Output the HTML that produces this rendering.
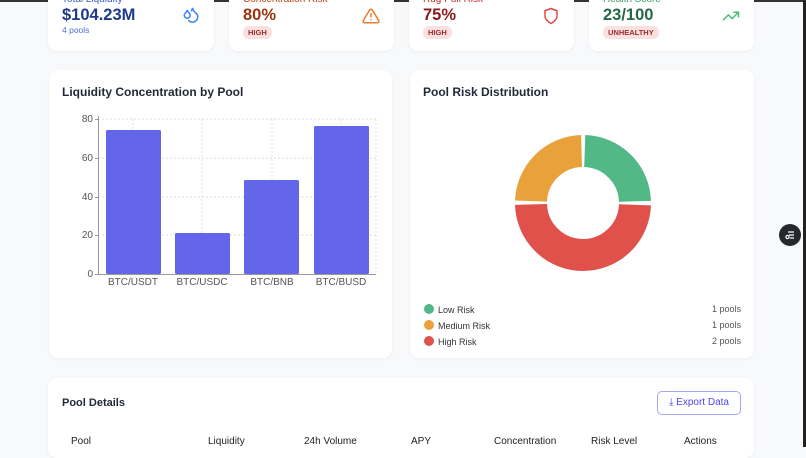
<!DOCTYPE html>
<html><head><meta charset="utf-8"><style>
*{box-sizing:border-box;margin:0;padding:0}
body{width:806px;height:447px;overflow:hidden;background:#f8f9fb;font-family:"Liberation Sans",sans-serif;position:relative}
.card{position:absolute;background:#fff;border-radius:9px;box-shadow:0 1px 3px rgba(0,0,0,.05)}
.lbl{position:absolute;left:14px;font-size:10px}
.val{position:absolute;left:14px;font-size:16.5px;font-weight:bold}
.badge{position:absolute;left:14px;font-size:7.5px;font-weight:bold;background:#fbe0e0;color:#9b2c2c;padding:2px 5px;border-radius:6px}
.ic{position:absolute;right:14px}
h3{position:absolute;left:13px;top:15px;font-size:12px;font-weight:bold;color:#1f2937}
.tick{position:absolute;font-size:10px;color:#555;text-align:right;width:20px}
.xl{position:absolute;top:277px;font-size:10px;color:#555;text-align:center;width:70px}
.leg{position:absolute;left:424px;font-size:9px;color:#333}
.leg i{display:inline-block;width:10px;height:10px;border-radius:50%;margin-right:4px;vertical-align:-1px}
.pc{position:absolute;right:65px;font-size:9px;color:#555}
.th{position:absolute;top:436px;font-size:10px;color:#222}
</style></head><body>
<div style="position:absolute;left:0;top:0;width:806px;height:2px;background:#333"></div>
<div style="position:absolute;right:0;top:0;width:3px;height:447px;background:#222"></div>

<div class="card" style="left:48px;top:-10px;width:166px;height:61px">
<div class="lbl" style="color:#3b5bcc;top:4px">Total Liquidity</div>
<div class="val" style="color:#1e3a8a;top:16px">$104.23M</div>
<div style="position:absolute;left:14px;top:35px;font-size:8.5px;color:#4a6fd8">4 pools</div>
<svg class="ic" style="top:16px" width="18" height="18" viewBox="0 0 24 24" fill="none" stroke="#3b82f6" stroke-width="2" stroke-linecap="round"><path d="M7 16.3c2.2 0 4-1.8 4-4 0-1.2-.6-2.3-1.8-3.3S7.3 6.6 7 5.3c-.3 1.3-1.1 2.6-2.2 3.7S3 11.1 3 12.3c0 2.2 1.8 4 4 4z"/><path d="M12.6 6.4C13.3 5.3 13.8 4 14 2.5c.5 2.5 2 4.9 4 6.5s3 3.5 3 5.5a7 7 0 0 1-11.9 4.9"/></svg>
</div>
<div class="card" style="left:229px;top:-10px;width:165px;height:61px">
<div class="lbl" style="color:#c2410c;top:4px">Concentration Risk</div>
<div class="val" style="color:#9a3412;top:16px">80%</div>
<div class="badge" style="top:36px">HIGH</div>
<svg class="ic" style="top:17px" width="18" height="18" viewBox="0 0 24 24" fill="none" stroke="#ea7a2c" stroke-width="2" stroke-linecap="round" stroke-linejoin="round"><path d="M10.3 3.9 1.8 18a2 2 0 0 0 1.7 3h17a2 2 0 0 0 1.7-3L13.7 3.9a2 2 0 0 0-3.4 0z"/><path d="M12 9v4M12 17h.01"/></svg>
</div>
<div class="card" style="left:409px;top:-10px;width:165px;height:61px">
<div class="lbl" style="color:#c53030;top:4px">Rug Pull Risk</div>
<div class="val" style="color:#8b1c1c;top:16px">75%</div>
<div class="badge" style="top:36px">HIGH</div>
<svg class="ic" style="top:17px" width="18" height="18" viewBox="0 0 24 24" fill="none" stroke="#e04848" stroke-width="2" stroke-linejoin="round"><path d="M12 22s8-4 8-10V5l-8-3-8 3v7c0 6 8 10 8 10z"/></svg>
</div>
<div class="card" style="left:589px;top:-10px;width:165px;height:61px">
<div class="lbl" style="color:#38a169;top:4px">Health Score</div>
<div class="val" style="color:#276749;top:16px">23/100</div>
<div class="badge" style="top:36px">UNHEALTHY</div>
<svg class="ic" style="top:17px" width="18" height="18" viewBox="0 0 24 24" fill="none" stroke="#48bb78" stroke-width="2" stroke-linecap="round" stroke-linejoin="round"><path d="M22 7l-8.5 8.5-5-5L2 17"/><path d="M16 7h6v6"/></svg>
</div>

<div class="card" style="left:49px;top:70px;width:343px;height:288px"><h3>Liquidity Concentration by Pool</h3></div>
<div class="card" style="left:410px;top:70px;width:344px;height:288px"><h3>Pool Risk Distribution</h3></div>

<svg style="position:absolute;left:0;top:0" width="806" height="447">
<g stroke="#ddd" stroke-dasharray="2 2" stroke-width="1">
<line x1="98" y1="119" x2="376" y2="119"/><line x1="98" y1="158" x2="376" y2="158"/><line x1="98" y1="197" x2="376" y2="197"/><line x1="98" y1="235" x2="376" y2="235"/>
<line x1="133" y1="119" x2="133" y2="274"/><line x1="202" y1="119" x2="202" y2="274"/><line x1="272" y1="119" x2="272" y2="274"/><line x1="341" y1="119" x2="341" y2="274"/><line x1="376" y1="119" x2="376" y2="274"/>
</g>
<g fill="#6366e8">
<rect x="106" y="130" width="55" height="144" rx="1.5"/><rect x="175" y="233" width="55" height="41" rx="1.5"/><rect x="244" y="180" width="55" height="94" rx="1.5"/><rect x="314" y="126" width="55" height="148" rx="1.5"/>
</g>
<g stroke="#999" stroke-width="1"><line x1="98.5" y1="116" x2="98.5" y2="274"/><line x1="98" y1="274.5" x2="376" y2="274.5"/>
<line x1="95" y1="119.5" x2="98" y2="119.5"/><line x1="95" y1="158.5" x2="98" y2="158.5"/><line x1="95" y1="197.5" x2="98" y2="197.5"/><line x1="95" y1="235.5" x2="98" y2="235.5"/><line x1="95" y1="274.5" x2="98" y2="274.5"/></g>
<g transform="rotate(-90 583 203)" fill="none" stroke-width="32">
<circle cx="583" cy="203" r="52" stroke="#52b886" stroke-dasharray="78.1 400" stroke-dashoffset="-1.8"/>
<circle cx="583" cy="203" r="52" stroke="#e0514c" stroke-dasharray="159.8 400" stroke-dashoffset="-83.5"/>
<circle cx="583" cy="203" r="52" stroke="#e9a23b" stroke-dasharray="78.1 400" stroke-dashoffset="-246.8"/>
</g>
</svg>
<div class="tick" style="left:73px;top:114px">80</div>
<div class="tick" style="left:73px;top:153px">60</div>
<div class="tick" style="left:73px;top:192px">40</div>
<div class="tick" style="left:73px;top:230px">20</div>
<div class="tick" style="left:73px;top:269px">0</div>
<div class="xl" style="left:98px">BTC/USDT</div>
<div class="xl" style="left:167px">BTC/USDC</div>
<div class="xl" style="left:237px">BTC/BNB</div>
<div class="xl" style="left:306px">BTC/BUSD</div>

<div class="leg" style="top:304px"><i style="background:#52b886"></i>Low Risk</div>
<div class="leg" style="top:320px"><i style="background:#e9a23b"></i>Medium Risk</div>
<div class="leg" style="top:336px"><i style="background:#e0514c"></i>High Risk</div>
<div class="pc" style="top:304px">1 pools</div>
<div class="pc" style="top:320px">1 pools</div>
<div class="pc" style="top:336px">2 pools</div>

<div style="position:absolute;left:779px;top:224px;width:22px;height:22px;border-radius:50%;background:#25282d"><svg width="22" height="22" viewBox="0 0 22 22" fill="none" stroke="#fff" stroke-width="1.2"><path d="M9 8h6M10 11h5M11 14h4"/><circle cx="8.5" cy="13" r="1.6"/></svg></div>

<div class="card" style="left:48px;top:378px;width:706px;height:80px"></div>
<div style="position:absolute;left:62px;top:397px;font-size:11px;font-weight:bold;color:#1f2937">Pool Details</div>
<div style="position:absolute;left:657px;top:391px;width:84px;height:24px;border:1px solid #a5a8f0;border-radius:5px;color:#4f46e5;font-size:10px;line-height:22px;text-align:center">⤓ Export Data</div>
<div class="th" style="left:71px">Pool</div>
<div class="th" style="left:208px">Liquidity</div>
<div class="th" style="left:304px">24h Volume</div>
<div class="th" style="left:411px">APY</div>
<div class="th" style="left:494px">Concentration</div>
<div class="th" style="left:591px">Risk Level</div>
<div class="th" style="left:684px">Actions</div>
</body></html>
